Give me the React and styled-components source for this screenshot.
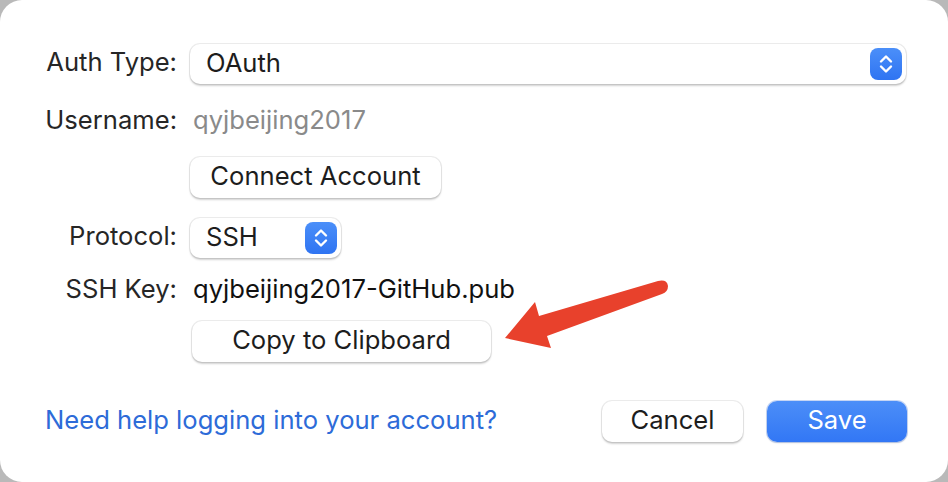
import styled, { createGlobalStyle } from 'styled-components';

const GlobalStyle = createGlobalStyle`
  html, body {
    margin: 0;
    padding: 0;
    background: #b9b9b9;
  }
  body {
    font-family: Inter, "Noto Sans", "Liberation Sans", sans-serif;
    -webkit-font-smoothing: antialiased;
  }
`;

const Dialog = styled.div`
  position: relative;
  width: 948px;
  height: 482px;
  box-sizing: border-box;
  background: #ffffff;
  border-radius: 22px;
  padding: 44px 42px 0 0;
  color: #262626;
  overflow: hidden;
`;

const Form = styled.div`
  display: flex;
  flex-direction: column;
`;

const Row = styled.div`
  display: grid;
  grid-template-columns: 177px 1fr;
  column-gap: 13px;
  align-items: center;
  height: ${(p) => p.$h || 40}px;
  margin-top: ${(p) => p.$gap || 0}px;
`;

const Label = styled.div`
  text-align: right;
  font-size: 25.6px;
  line-height: 1;
  padding-bottom: 4px;
`;

const Value = styled.div`
  font-size: 25.6px;
  line-height: 1;
  padding-bottom: 4px;
  color: ${(p) => (p.$muted ? '#8a8a8a' : '#111')};
  padding-left: 3px;
`;

const Select = styled.div`
  display: flex;
  align-items: center;
  justify-content: space-between;
  box-sizing: border-box;
  width: ${(p) => p.$w || '100%'};
  height: 40px;
  padding: 0 4px 0 16px;
  background: #fff;
  border-radius: 10px;
  box-shadow: 0 0 0 1px rgba(0, 0, 0, 0.07), 0 1.5px 2px rgba(0, 0, 0, 0.18);
  font-size: 25.6px;
  color: #1d1d1d;

  span {
    line-height: 1;
    padding-bottom: 3px;
  }
`;

const Stepper = styled.div`
  width: 32px;
  height: 32px;
  border-radius: 8px;
  background: linear-gradient(#4b8ff9, #2f74f2);
  display: flex;
  align-items: center;
  justify-content: center;
`;

const Button = styled.button`
  box-sizing: border-box;
  height: 41px;
  width: ${(p) => p.$w}px;
  border: none;
  border-radius: 10px;
  font-family: inherit;
  font-size: 25.6px;
  line-height: 1;
  padding: 0 0 3px;
  cursor: pointer;
  background: ${(p) => (p.$primary ? 'linear-gradient(#4c8ef8, #3277f5)' : '#fff')};
  color: ${(p) => (p.$primary ? '#fff' : '#1d1d1d')};
  box-shadow: ${(p) =>
    p.$primary
      ? '0 0 0 1px rgba(40, 100, 220, 0.25), 0 1px 2px rgba(0, 0, 0, 0.15)'
      : '0 0 0 1px rgba(0, 0, 0, 0.07), 0 1.5px 2px rgba(0, 0, 0, 0.18)'};
`;

const Footer = styled.div`
  display: flex;
  align-items: center;
  margin-top: 39px;
  padding-left: 45px;
`;

const HelpLink = styled.a`
  font-size: 25.6px;
  line-height: 1;
  padding-bottom: 3px;
  color: #2d6bd8;
  text-decoration: none;
  flex: 1;
`;

const Actions = styled.div`
  display: flex;
  gap: 24px;
  margin-right: -1px;
`;

const Arrow = styled.svg`
  position: absolute;
  left: 0;
  top: 0;
  pointer-events: none;
`;

const Chevrons = () => (
  <svg width="18" height="24" viewBox="0 0 18 24" fill="none">
    <path d="M4 9.5 L9 4.5 L14 9.5" stroke="#fff" strokeWidth="2.4" strokeLinecap="round" strokeLinejoin="round" />
    <path d="M4 14.5 L9 19.5 L14 14.5" stroke="#fff" strokeWidth="2.4" strokeLinecap="round" strokeLinejoin="round" />
  </svg>
);

const App = () => {
  return (
    <>
      <GlobalStyle />
      <Dialog>
        <Form>
          <Row>
            <Label>Auth Type:</Label>
            <Select>
              <span>OAuth</span>
              <Stepper>
                <Chevrons />
              </Stepper>
            </Select>
          </Row>
          <Row $gap={18}>
            <Label>Username:</Label>
            <Value $muted>qyjbeijing2017</Value>
          </Row>
          <Row $gap={15} $h={41}>
            <span />
            <div>
              <Button $w={251}>Connect Account</Button>
            </div>
          </Row>
          <Row $gap={20}>
            <Label>Protocol:</Label>
            <Select $w="151px">
              <span>SSH</span>
              <Stepper>
                <Chevrons />
              </Stepper>
            </Select>
          </Row>
          <Row $gap={13}>
            <Label>SSH Key:</Label>
            <Value>qyjbeijing2017-GitHub.pub</Value>
          </Row>
          <Row $gap={10} $h={41}>
            <span />
            <div>
              <Button $w={299} style={{ marginLeft: 2 }}>Copy to Clipboard</Button>
            </div>
          </Row>
        </Form>
        <Footer>
          <HelpLink href="#">Need help logging into your account?</HelpLink>
          <Actions>
            <Button $w={141}>Cancel</Button>
            <Button $w={140} $primary>Save</Button>
          </Actions>
        </Footer>
        <Arrow width="948" height="482" viewBox="0 0 948 482">
          <path
            d="M505 338 L535 302 L539 316 L658 281 Q667 279 668 286 Q668 292 662 294 L547 336 L551 348 Z"
            fill="#e8412c"
          />
        </Arrow>
      </Dialog>
    </>
  );
};

export default App;
